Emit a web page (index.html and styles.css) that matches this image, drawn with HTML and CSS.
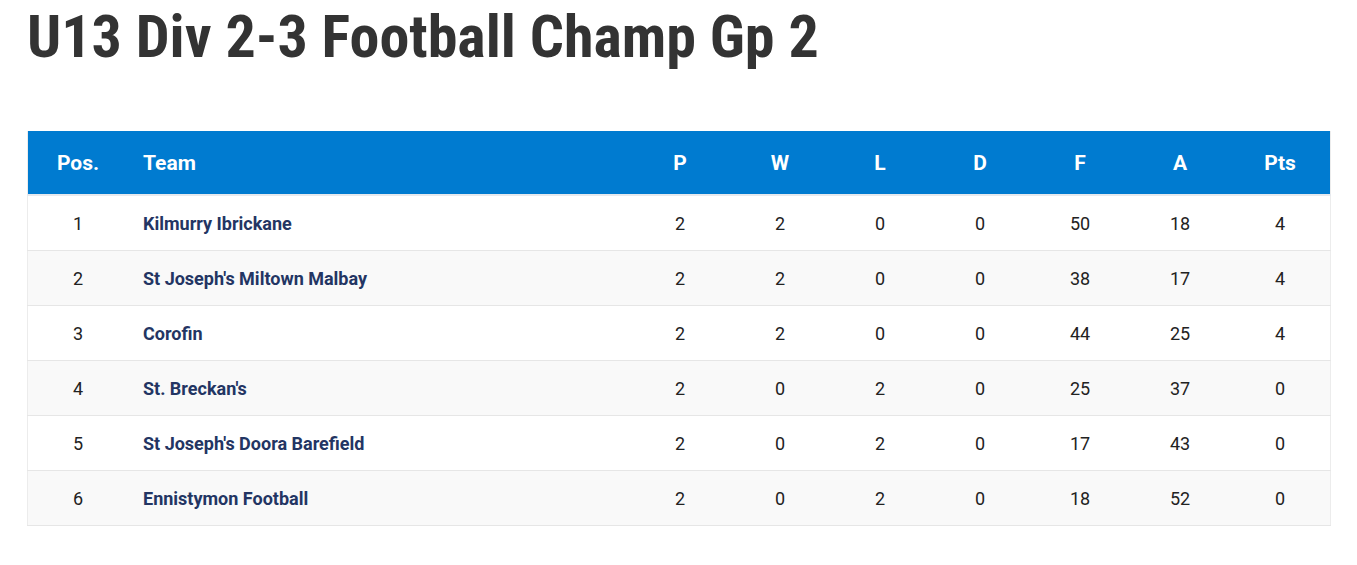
FILE: index.html
```html
<!DOCTYPE html>
<html>
<head>
<meta charset="utf-8">
<link rel="stylesheet" href="styles.css">
</head>
<body>
<div class="page">
  <h1 class="title">U13 Div 2-3 Football Champ Gp 2</h1>
  <table class="league">
    <thead>
      <tr>
        <th class="pos">Pos.</th>
        <th class="team">Team</th>
        <th class="num">P</th>
        <th class="num">W</th>
        <th class="num">L</th>
        <th class="num">D</th>
        <th class="num">F</th>
        <th class="num">A</th>
        <th class="num">Pts</th>
      </tr>
    </thead>
    <tbody>
      <tr><td class="pos">1</td><td class="team">Kilmurry Ibrickane</td><td class="num">2</td><td class="num">2</td><td class="num">0</td><td class="num">0</td><td class="num">50</td><td class="num">18</td><td class="num">4</td></tr>
      <tr><td class="pos">2</td><td class="team">St Joseph's Miltown Malbay</td><td class="num">2</td><td class="num">2</td><td class="num">0</td><td class="num">0</td><td class="num">38</td><td class="num">17</td><td class="num">4</td></tr>
      <tr><td class="pos">3</td><td class="team">Corofin</td><td class="num">2</td><td class="num">2</td><td class="num">0</td><td class="num">0</td><td class="num">44</td><td class="num">25</td><td class="num">4</td></tr>
      <tr><td class="pos">4</td><td class="team">St. Breckan's</td><td class="num">2</td><td class="num">0</td><td class="num">2</td><td class="num">0</td><td class="num">25</td><td class="num">37</td><td class="num">0</td></tr>
      <tr><td class="pos">5</td><td class="team">St Joseph's Doora Barefield</td><td class="num">2</td><td class="num">0</td><td class="num">2</td><td class="num">0</td><td class="num">17</td><td class="num">43</td><td class="num">0</td></tr>
      <tr><td class="pos">6</td><td class="team">Ennistymon Football</td><td class="num">2</td><td class="num">0</td><td class="num">2</td><td class="num">0</td><td class="num">18</td><td class="num">52</td><td class="num">0</td></tr>
    </tbody>
  </table>
</div>
</body>
</html>
```
FILE: styles.css
```css
html, body {
  margin: 0;
  padding: 0;
  background: #fff;
}
body {
  font-family: Roboto, "Liberation Sans", sans-serif;
  color: #222;
}
.page {
  padding: 0 26px 0 27px;
}
.title {
  margin: 0;
  padding-top: 7px;
  height: 131px;
  box-sizing: border-box;
  font-family: "Roboto Condensed", Roboto, sans-serif;
  font-stretch: condensed;
  font-weight: 700;
  font-size: 60px;
  line-height: 60px;
  color: #333;
}
.league {
  width: 1304px;
  border-collapse: collapse;
  border-left: 1px solid #ececec;
  border-right: 1px solid #ececec;
}
.league thead th {
  background: #007bd0;
  color: #fff;
  font-size: 21px;
  font-weight: 700;
  height: 63px;
  padding: 0;
  border-bottom: 2px solid #e6e9ee;
}
.league td {
  height: 54px;
  padding: 0;
  font-size: 18px;
  border-bottom: 1px solid #e6e6e6;
}
.league tbody tr:nth-child(even) td {
  background: #f9f9f9;
}
.pos {
  width: 100px;
  text-align: center;
}
.team {
  text-align: left;
  padding-left: 15px !important;
}
td.team {
  font-weight: 700;
  color: #233563;
}
.num {
  width: 100px;
  text-align: center;
}
```
